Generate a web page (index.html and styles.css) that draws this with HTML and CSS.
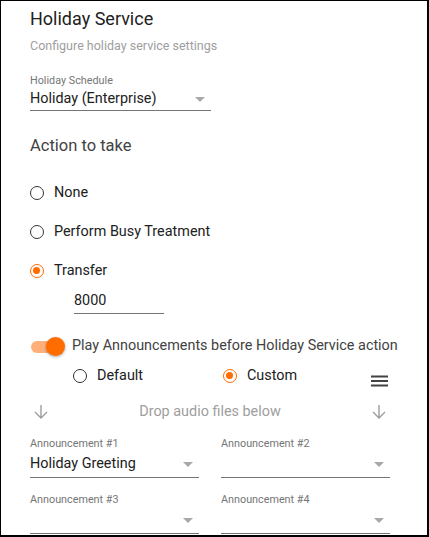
FILE: index.html
```html
<!DOCTYPE html>
<html>
<head>
<meta charset="utf-8">
<link rel="stylesheet" href="styles.css">
</head>
<body>
<div class="panel">
  <h1 class="title">Holiday Service</h1>
  <div class="subtitle">Configure holiday service settings</div>

  <div class="field schedule">
    <div class="label">Holiday Schedule</div>
    <div class="select"><span>Holiday (Enterprise)</span><i class="caret"></i></div>
  </div>

  <h2 class="section">Action to take</h2>

  <div class="radios">
    <div class="radio"><span class="circle"></span><span>None</span></div>
    <div class="radio"><span class="circle"></span><span>Perform Busy Treatment</span></div>
    <div class="radio"><span class="circle on"></span><span>Transfer</span></div>
  </div>
  <div class="transfer-input">8000</div>

  <div class="toggle-row">
    <span class="toggle"><span class="track"></span><span class="thumb"></span></span>
    <span>Play Announcements before Holiday Service action</span>
  </div>

  <div class="mode-row">
    <div class="radio small"><span class="circle"></span><span>Default</span></div>
    <div class="radio small custom"><span class="circle on"></span><span>Custom</span></div>
    <svg class="menu" width="17" height="12" viewBox="0 0 17 12"><rect x="0" y="0.5" width="17" height="2" fill="#424242"/><rect x="0" y="5" width="17" height="2" fill="#424242"/><rect x="0" y="9.5" width="17" height="2" fill="#424242"/></svg>
  </div>

  <div class="drop-row">
    <svg width="14" height="16" viewBox="0 0 14 16"><path d="M7 1v13M1 8l6 6 6-6" stroke="#9e9e9e" stroke-width="1.4" fill="none"/></svg>
    <span>Drop audio files below</span>
    <svg width="14" height="16" viewBox="0 0 14 16"><path d="M7 1v13M1 8l6 6 6-6" stroke="#9e9e9e" stroke-width="1.4" fill="none"/></svg>
  </div>

  <div class="grid">
    <div class="field">
      <div class="label">Announcement #1</div>
      <div class="select"><span>Holiday Greeting</span><i class="caret"></i></div>
    </div>
    <div class="field">
      <div class="label">Announcement #2</div>
      <div class="select"><span></span><i class="caret"></i></div>
    </div>
    <div class="field">
      <div class="label">Announcement #3</div>
      <div class="select"><span></span><i class="caret"></i></div>
    </div>
    <div class="field">
      <div class="label">Announcement #4</div>
      <div class="select"><span></span><i class="caret"></i></div>
    </div>
  </div>
</div>
</body>
</html>
```
FILE: styles.css
```css
html, body {
  margin: 0;
  padding: 0;
  background: #fff;
}
body {
  font-family: Roboto, "Noto Sans", sans-serif;
  color: #212121;
}
.panel {
  box-sizing: border-box;
  width: 429px;
  height: 537px;
  border: 1px solid #000;
  border-right-width: 2px;
  border-bottom-width: 2px;
  padding: 6px 0 0 29px;
  overflow: hidden;
}
.title {
  margin: 0;
  font-size: 18px;
  font-weight: 400;
  line-height: 24px;
  color: #212121;
}
.subtitle {
  margin-top: 7px;
  font-size: 12.5px;
  line-height: 16px;
  color: #9e9e9e;
}
.field .label {
  font-size: 10.8px;
  line-height: 13px;
  color: #757575;
}
.schedule {
  margin-top: 20px;
  width: 181px;
}
.select {
  display: flex;
  align-items: center;
  justify-content: space-between;
  height: 24px;
  border-bottom: 1px solid #757575;
  font-size: 14.4px;
  color: #212121;
  box-sizing: border-box;
}
.caret {
  width: 0;
  height: 0;
  border-left: 5px solid transparent;
  border-right: 5px solid transparent;
  border-top: 5px solid #a8a8a8;
  margin-right: 6px;
  margin-top: 2px;
}
.section {
  margin: 24px 0 0 0;
  font-size: 16.5px;
  font-weight: 400;
  line-height: 22px;
  color: #424242;
}
.radios {
  margin-top: 26px;
  display: flex;
  flex-direction: column;
  gap: 19px;
}
.radio {
  display: flex;
  align-items: center;
  gap: 10px;
  font-size: 14.4px;
  line-height: 20px;
  color: #212121;
}
.circle {
  box-sizing: border-box;
  width: 14px;
  height: 14px;
  border: 1.5px solid #333;
  border-radius: 50%;
  position: relative;
  flex: none;
}
.circle.on {
  border-color: #ff6d00;
}
.circle.on::after {
  content: "";
  position: absolute;
  left: 2px;
  top: 2px;
  width: 7px;
  height: 7px;
  border-radius: 50%;
  background: #ff6d00;
}
.transfer-input {
  margin: 10px 0 0 44px;
  width: 90px;
  border-bottom: 1px solid #757575;
  font-size: 14.4px;
  line-height: 20px;
  padding-bottom: 2px;
}
.toggle-row {
  margin-top: 22px;
  display: flex;
  align-items: center;
  gap: 9px;
  font-size: 14.4px;
  line-height: 20px;
  color: #424242;
}
.toggle {
  position: relative;
  width: 33px;
  height: 20px;
  flex: none;
}
.track {
  position: absolute;
  left: 1px;
  top: 5px;
  width: 30px;
  height: 12px;
  border-radius: 6px;
  background: #ffb07a;
}
.thumb {
  position: absolute;
  left: 16px;
  top: 1px;
  width: 19px;
  height: 19px;
  border-radius: 50%;
  background: #ff6d00;
  box-shadow: 0 1px 3px rgba(0,0,0,0.35);
}
.mode-row {
  margin-top: 9px;
  display: flex;
  align-items: center;
  padding-left: 43px;
}
.radio.small {
  width: 150px;
}
.radio.custom {
  width: 148px;
}
.menu {
  margin-top: 10px;
}
.drop-row {
  margin-top: 16px;
  width: 352px;
  display: flex;
  align-items: center;
  justify-content: space-between;
  font-size: 14.4px;
  color: #9e9e9e;
  padding-left: 4px;
}
.grid {
  margin-top: 17px;
  display: grid;
  grid-template-columns: 169px 169px;
  column-gap: 22px;
  row-gap: 15px;
}
.grid .select {
  height: 28px;
}
```
